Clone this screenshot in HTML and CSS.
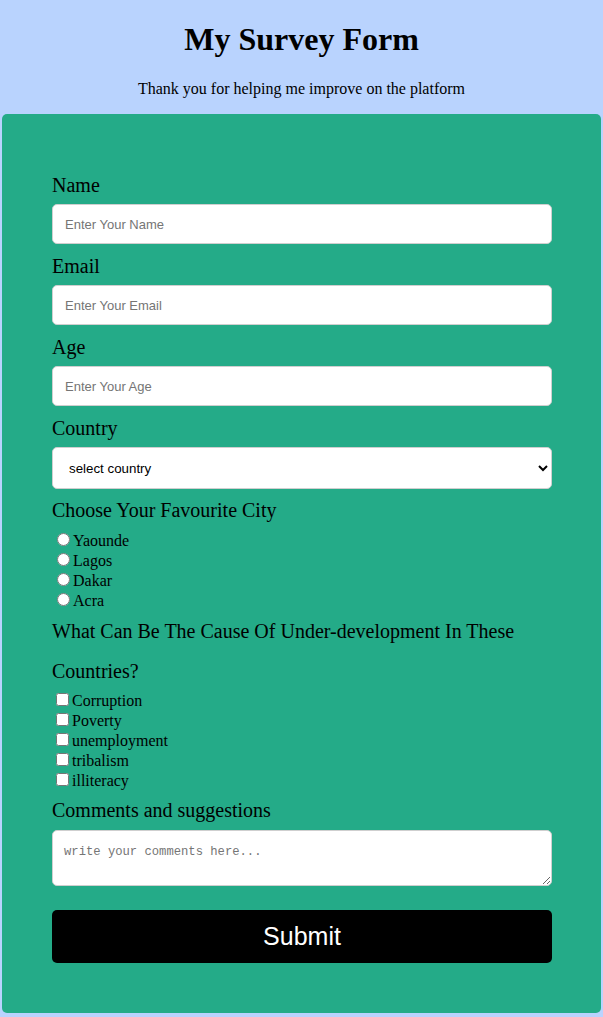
FILE: index.html
```html
<!DOCTYPE html>
<html lang="en">
<head>
<meta charset="utf-8">
<title>My Survey Form</title>
<link rel="stylesheet" href="styles.css">
</head>
<body>
<header class="page-header">
  <h1 class="title">My Survey Form</h1>
  <p class="subtitle">Thank you for helping me improve on the platform</p>
</header>
<form class="card">
  <label class="field-label" for="name">Name</label>
  <input class="text-input" id="name" type="text" placeholder="Enter Your Name">

  <label class="field-label" for="email">Email</label>
  <input class="text-input" id="email" type="email" placeholder="Enter Your Email">

  <label class="field-label" for="age">Age</label>
  <input class="text-input" id="age" type="number" placeholder="Enter Your Age">

  <label class="field-label" for="country">Country</label>
  <select class="select-input" id="country">
    <option>select country</option>
    <option>Cameroon</option>
    <option>Nigeria</option>
    <option>Senegal</option>
    <option>Ghana</option>
  </select>

  <div class="field-label group-label">Choose Your Favourite City</div>
  <div class="options">
    <label class="option"><input class="radio" type="radio" name="city">Yaounde</label>
    <label class="option"><input class="radio" type="radio" name="city">Lagos</label>
    <label class="option"><input class="radio" type="radio" name="city">Dakar</label>
    <label class="option"><input class="radio" type="radio" name="city">Acra</label>
  </div>

  <div class="question">What Can Be The Cause Of Under-development In These Countries?</div>
  <div class="options">
    <label class="option"><input class="check" type="checkbox">Corruption</label>
    <label class="option"><input class="check" type="checkbox">Poverty</label>
    <label class="option"><input class="check" type="checkbox">unemployment</label>
    <label class="option"><input class="check" type="checkbox">tribalism</label>
    <label class="option"><input class="check" type="checkbox">illiteracy</label>
  </div>

  <label class="field-label comments-label" for="comments">Comments and suggestions</label>
  <textarea class="textarea" id="comments" placeholder="write your comments here..."></textarea>

  <button class="submit" type="submit">Submit</button>
</form>
</body>
</html>
```

FILE: styles.css
```css
body {
  margin: 0;
  background: #b9d3fe;
  font-family: "Liberation Serif", "Times New Roman", serif;
  color: #000;
}

.page-header {
  text-align: center;
  overflow: hidden;
}

.title {
  font-size: 32px;
  font-weight: bold;
  margin: 21px 0 22px;
}

.subtitle {
  font-size: 16px;
  margin: 16px 0 16px;
}

.card {
  display: block;
  margin: 0 2px 4px;
  background: #24ab88;
  border-radius: 5px;
  padding: 60px 49px 50px 50px;
}

.field-label {
  display: block;
  font-size: 20px;
  margin-bottom: 7px;
}

.group-label {
  margin-bottom: 8px;
}

.text-input {
  display: block;
  box-sizing: border-box;
  width: 100%;
  height: 40px;
  margin: 0 0 11px;
  padding: 0 12px;
  border: 1px solid #cfcfcf;
  border-radius: 5px;
  background: #fff;
  font-family: "Liberation Sans", Arial, sans-serif;
  font-size: 13px;
  color: #000;
}

.text-input::placeholder {
  color: #757575;
}

.select-input {
  display: block;
  box-sizing: border-box;
  width: 100%;
  height: 42px;
  margin: 0 0 10px;
  padding: 0 4px 0 12px;
  border: 1px solid #cfcfcf;
  border-radius: 5px;
  background: #fff;
  font-family: "Liberation Sans", Arial, sans-serif;
  font-size: 13.33px;
  color: #000;
}

.options {
  display: flex;
  flex-direction: column;
}

.option {
  display: block;
  font-size: 16px;
}

.radio {
  margin: 3px 3px 0 5px;
}

.check {
  margin: 3px 3px 3px 4px;
}

.question {
  font-size: 20px;
  line-height: 40px;
  margin: 1px 0 -1px;
}

.comments-label {
  margin-top: 9px;
  margin-bottom: 8px;
}

.textarea {
  display: block;
  box-sizing: border-box;
  width: 100%;
  height: 56px;
  margin: 0;
  padding: 14px 11px 10px;
  border: 1px solid #cfcfcf;
  border-radius: 5px;
  background: #fff;
  font-family: "Liberation Mono", "Courier New", monospace;
  font-size: 12.2px;
}

.textarea::placeholder {
  color: #757575;
}

.submit {
  display: block;
  box-sizing: border-box;
  width: 100%;
  height: 53px;
  margin-top: 24px;
  border: none;
  border-radius: 5px;
  background: #000;
  color: #fff;
  font-family: "Liberation Sans", Arial, sans-serif;
  font-size: 25px;
  cursor: pointer;
}
```
